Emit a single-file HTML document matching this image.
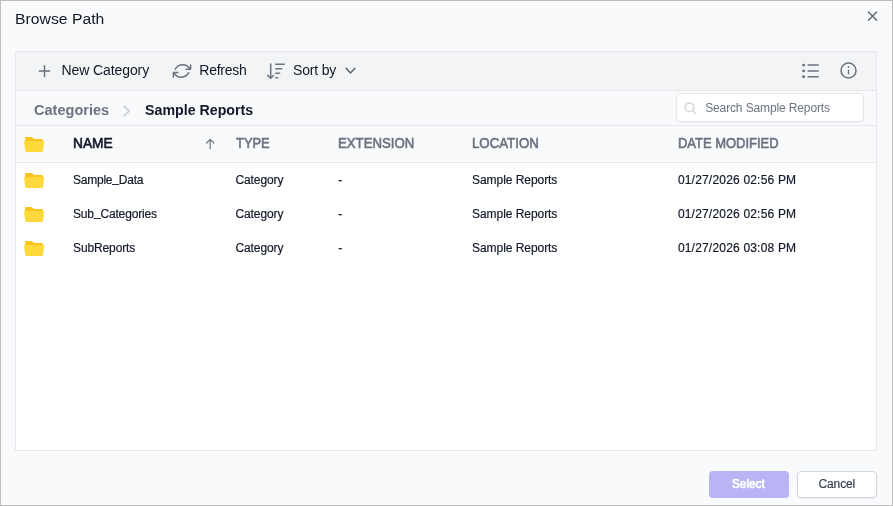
<!DOCTYPE html>
<html lang="en">
<head>
<meta charset="utf-8">
<title>Browse Path</title>
<style>
*{box-sizing:border-box;margin:0;padding:0}
html,body{width:893px;height:506px;overflow:hidden;background:#f9fafb}
body{font-family:"Liberation Sans",Arial,sans-serif;color:#111827;position:relative}
.dlg{will-change:transform;position:absolute;left:0;top:0;width:893px;height:506px;background:#f9fafb}
.frame{position:absolute;left:0;top:0;width:893px;height:506px;border:1px solid #bdbdbd;pointer-events:none}
.t{position:absolute;white-space:nowrap;line-height:1}
.b{position:absolute}
.u{position:relative;top:-2px}
svg{position:absolute;overflow:visible}
.i{fill:none;stroke:#6b7280;stroke-width:1.5;stroke-linecap:round;stroke-linejoin:round}
</style>
</head>
<body>
<div class="dlg">
  <div class="b panel" style="left:15px;top:51px;width:862px;height:400px;border:1px solid #e5e7eb;background:#fff"></div>
  <div class="b toolbar" style="left:16px;top:52px;width:860px;height:39px;background:#f3f4f6;border-bottom:1px solid #e5e7eb"></div>
  <div class="b crumbs" style="left:16px;top:91px;width:860px;height:35px;background:#f9fafb;border-bottom:1px solid #e5e7eb"></div>
  <div class="b thead" style="left:16px;top:126px;width:860px;height:37px;background:#f9fafb;border-bottom:1px solid #e5e7eb"></div>
  <div class="b search" style="left:676px;top:93px;width:188px;height:29px;border:1px solid #e5e7eb;border-radius:4px;background:#fff;box-shadow:0 1px 2px rgba(0,0,0,.05)"></div>
  <div class="b btn-select" style="left:709px;top:471px;width:80px;height:27px;border-radius:4px;background:#b9b5f5"></div>
  <div class="b btn-cancel" style="left:797px;top:471px;width:80px;height:27px;border-radius:4px;background:#fff;border:1px solid #d1d5db;box-shadow:0 1px 2px rgba(0,0,0,.06)"></div>

  <div class="t" id="title" style="left:14.63px;top:11px;font-size:15.5px;color:#111827;transform:scaleX(1.0159);transform-origin:0 50%;">Browse Path</div>
  <svg style="left:867px;top:11px" width="11" height="11" viewBox="0 0 11 11"><path class="i" d="M1.5 1.1 L9.6 9.2 M9.6 1.1 L1.5 9.2" style="stroke-width:1.4;stroke:#5b6472"/></svg>

  <svg style="left:38px;top:65px" width="13" height="13" viewBox="0 0 13 13"><path class="i" d="M6.5 0.8 V11.4 M1.3 6.1 H11.7"/></svg>
  <div class="t" id="tnew" style="left:61.47px;top:63px;font-size:14px;color:#111827;letter-spacing:-0.089px;">New Category</div>
  <svg style="left:172px;top:62px" width="20" height="18" viewBox="0 0 20 18"><g class="i"><path d="M3.3 7.2 A8.4 8.4 0 0 1 18.1 7.1"/><path d="M18.6 3 V7.3 H14.2"/><path d="M16.7 10.7 A8.4 8.4 0 0 1 1.9 10.8"/><path d="M1.4 14.9 V10.6 H5.8"/></g></svg>
  <div class="t" id="tref" style="left:199.33px;top:63px;font-size:14px;color:#111827;letter-spacing:-0.256px;">Refresh</div>
  <svg style="left:266px;top:62px" width="20" height="18" viewBox="0 0 20 18"><g class="i"><path d="M4.7 1.9 V16.1 M1.7 13.2 L4.7 16.2 L7.7 13.2"/><path d="M9.8 2.2 H18.2 M9.8 6.8 H15.8 M9.8 11.2 H13.6 M9.8 15.7 H11.6"/></g></svg>
  <div class="t" id="tsort" style="left:293.02px;top:63px;font-size:14px;color:#111827;letter-spacing:-0.186px;">Sort by</div>
  <svg style="left:345px;top:67px" width="11" height="7" viewBox="0 0 11 7"><path class="i" d="M1.1 1.3 L5.5 5.9 L9.9 1.3" style="stroke:#5b6472"/></svg>
  <svg style="left:802px;top:63px" width="18" height="16" viewBox="0 0 18 16"><g fill="#6b7280"><circle cx="1.6" cy="2.1" r="1.45"/><circle cx="1.6" cy="7.9" r="1.45"/><circle cx="1.6" cy="13.8" r="1.45"/><rect x="5.4" y="1.35" width="11.6" height="1.5" rx=".75"/><rect x="5.4" y="7.15" width="11.6" height="1.5" rx=".75"/><rect x="5.4" y="13.05" width="11.6" height="1.5" rx=".75"/></g></svg>
  <svg style="left:840px;top:62.25px" width="17" height="17" viewBox="0 0 17 17"><circle cx="8.5" cy="8.5" r="7.5" fill="none" stroke="#6b7280" stroke-width="1.5"/><rect x="7.8" y="7.4" width="1.4" height="5" rx=".7" fill="#6b7280"/><circle cx="8.5" cy="5" r="0.9" fill="#6b7280"/></svg>

  <div class="t" id="bc1" style="left:33.82px;top:103px;font-size:14px;color:#6b7280;font-weight:bold;transform:scaleX(1.0385);transform-origin:0 50%;">Categories</div>
  <svg style="left:122px;top:105px" width="8" height="12" viewBox="0 0 8 12"><path d="M1.6 0.7 L7.2 5.95 L1.6 11.2" fill="none" stroke="#d1d5db" stroke-width="1.9" stroke-linejoin="miter"/></svg>
  <div class="t" id="bc2" style="left:144.86px;top:103px;font-size:14px;color:#111827;font-weight:bold;transform:scaleX(1.0152);transform-origin:0 50%;">Sample Reports</div>
  <svg style="left:684px;top:102px" width="13" height="13" viewBox="0 0 13 13"><circle cx="5.4" cy="5.3" r="4.3" fill="none" stroke="#d1d5db" stroke-width="1.5"/><path d="M8.6 8.5 L11.9 11.8" stroke="#d1d5db" stroke-width="1.5" stroke-linecap="round"/></svg>
  <div class="t" id="ph" style="left:705.16px;top:102px;font-size:12px;color:#6b7280;letter-spacing:-0.126px;">Search Sample Reports</div>

  <svg style="left:24px;top:137.0px" width="20.2" height="15" viewBox="0 0 20.2 15"><path d="M1.1 1 Q1.1 0.1 2 0.1 H7.5 Q8 0.1 8.4 0.45 L10.2 1.9 H17.8 Q18.8 1.9 18.8 2.9 V6 H1.1 Z" fill="#fcc419"/><path d="M0.7 4 H19.5 Q20.25 4 20.15 4.8 L19.1 13.8 Q18.95 14.9 17.9 14.9 H2.3 Q1.25 14.9 1.1 13.8 L0.05 4.8 Q-0.05 4 0.7 4 Z" fill="#ffd93b"/></svg>
  <div class="t" id="h1" style="left:72.73px;top:136px;font-size:14px;color:#111827;-webkit-text-stroke:0.6px currentColor;transform:scaleX(0.9831);transform-origin:0 50%;">NAME</div>
  <svg style="left:205px;top:138px" width="10" height="12" viewBox="0 0 10 12"><path class="i" d="M5.2 10.7 V1.5 M1.6 5 L5.2 1.4 L8.8 5" style="stroke-width:1.2"/></svg>
  <div class="t" id="h2" style="left:235.99px;top:136px;font-size:14px;color:#6b7280;-webkit-text-stroke:0.6px currentColor;transform:scaleX(0.9210);transform-origin:0 50%;">TYPE</div><div class="t" id="h3" style="left:338.47px;top:136px;font-size:14px;color:#6b7280;-webkit-text-stroke:0.6px currentColor;transform:scaleX(0.9414);transform-origin:0 50%;">EXTENSION</div><div class="t" id="h4" style="left:472.42px;top:136px;font-size:14px;color:#6b7280;-webkit-text-stroke:0.6px currentColor;transform:scaleX(0.9468);transform-origin:0 50%;">LOCATION</div><div class="t" id="h5" style="left:678.43px;top:136px;font-size:14px;color:#6b7280;-webkit-text-stroke:0.6px currentColor;transform:scaleX(0.9260);transform-origin:0 50%;">DATE MODIFIED</div>
  <svg style="left:24px;top:173.0px" width="20.2" height="15" viewBox="0 0 20.2 15"><path d="M1.1 1 Q1.1 0.1 2 0.1 H7.5 Q8 0.1 8.4 0.45 L10.2 1.9 H17.8 Q18.8 1.9 18.8 2.9 V6 H1.1 Z" fill="#fcc419"/><path d="M0.7 4 H19.5 Q20.25 4 20.15 4.8 L19.1 13.8 Q18.95 14.9 17.9 14.9 H2.3 Q1.25 14.9 1.1 13.8 L0.05 4.8 Q-0.05 4 0.7 4 Z" fill="#ffd93b"/></svg>
  <div class="t" id="r0n" style="left:73.03px;top:174px;font-size:12px;color:#111827;-webkit-text-stroke:0.18px currentColor;letter-spacing:-0.232px;">Sample<span class="u">_</span>Data</div><div class="t" id="r0t" style="left:235.45px;top:174px;font-size:12px;color:#111827;-webkit-text-stroke:0.18px currentColor;letter-spacing:-0.087px;">Category</div><div class="t" id="r0e" style="left:338.21px;top:174px;font-size:12px;color:#111827;-webkit-text-stroke:0.18px currentColor;">-</div><div class="t" id="r0l" style="left:472.05px;top:174px;font-size:12px;color:#111827;-webkit-text-stroke:0.18px currentColor;letter-spacing:-0.057px;">Sample Reports</div><div class="t" id="r0d" style="left:677.88px;top:174px;font-size:12px;color:#111827;-webkit-text-stroke:0.18px currentColor;letter-spacing:0.193px;">01/27/2026 02:56 PM</div>
  <svg style="left:24px;top:207.0px" width="20.2" height="15" viewBox="0 0 20.2 15"><path d="M1.1 1 Q1.1 0.1 2 0.1 H7.5 Q8 0.1 8.4 0.45 L10.2 1.9 H17.8 Q18.8 1.9 18.8 2.9 V6 H1.1 Z" fill="#fcc419"/><path d="M0.7 4 H19.5 Q20.25 4 20.15 4.8 L19.1 13.8 Q18.95 14.9 17.9 14.9 H2.3 Q1.25 14.9 1.1 13.8 L0.05 4.8 Q-0.05 4 0.7 4 Z" fill="#ffd93b"/></svg>
  <div class="t" id="r1n" style="left:73.01px;top:208px;font-size:12px;color:#111827;-webkit-text-stroke:0.18px currentColor;letter-spacing:-0.158px;">Sub<span class="u">_</span>Categories</div><div class="t" id="r1t" style="left:235.45px;top:208px;font-size:12px;color:#111827;-webkit-text-stroke:0.18px currentColor;letter-spacing:-0.087px;">Category</div><div class="t" id="r1e" style="left:338.21px;top:208px;font-size:12px;color:#111827;-webkit-text-stroke:0.18px currentColor;">-</div><div class="t" id="r1l" style="left:472.05px;top:208px;font-size:12px;color:#111827;-webkit-text-stroke:0.18px currentColor;letter-spacing:-0.057px;">Sample Reports</div><div class="t" id="r1d" style="left:677.88px;top:208px;font-size:12px;color:#111827;-webkit-text-stroke:0.18px currentColor;letter-spacing:0.193px;">01/27/2026 02:56 PM</div>
  <svg style="left:24px;top:241.0px" width="20.2" height="15" viewBox="0 0 20.2 15"><path d="M1.1 1 Q1.1 0.1 2 0.1 H7.5 Q8 0.1 8.4 0.45 L10.2 1.9 H17.8 Q18.8 1.9 18.8 2.9 V6 H1.1 Z" fill="#fcc419"/><path d="M0.7 4 H19.5 Q20.25 4 20.15 4.8 L19.1 13.8 Q18.95 14.9 17.9 14.9 H2.3 Q1.25 14.9 1.1 13.8 L0.05 4.8 Q-0.05 4 0.7 4 Z" fill="#ffd93b"/></svg>
  <div class="t" id="r2n" style="left:73.00px;top:242px;font-size:12px;color:#111827;-webkit-text-stroke:0.18px currentColor;letter-spacing:-0.123px;">SubReports</div><div class="t" id="r2t" style="left:235.45px;top:242px;font-size:12px;color:#111827;-webkit-text-stroke:0.18px currentColor;letter-spacing:-0.087px;">Category</div><div class="t" id="r2e" style="left:338.21px;top:242px;font-size:12px;color:#111827;-webkit-text-stroke:0.18px currentColor;">-</div><div class="t" id="r2l" style="left:472.05px;top:242px;font-size:12px;color:#111827;-webkit-text-stroke:0.18px currentColor;letter-spacing:-0.057px;">Sample Reports</div><div class="t" id="r2d" style="left:677.88px;top:242px;font-size:12px;color:#111827;-webkit-text-stroke:0.18px currentColor;letter-spacing:0.193px;">01/27/2026 03:08 PM</div>
  <div class="t" id="bsel" style="left:731.64px;top:478px;font-size:12px;color:#ffffff;-webkit-text-stroke:0.7px currentColor;transform:scaleX(0.9801);transform-origin:0 50%;">Select</div>
  <div class="t" id="bcan" style="left:818.52px;top:478px;font-size:12px;color:#374151;-webkit-text-stroke:0.18px currentColor;letter-spacing:-0.126px;">Cancel</div>
  <div class="frame"></div>
</div>
</body>
</html>
